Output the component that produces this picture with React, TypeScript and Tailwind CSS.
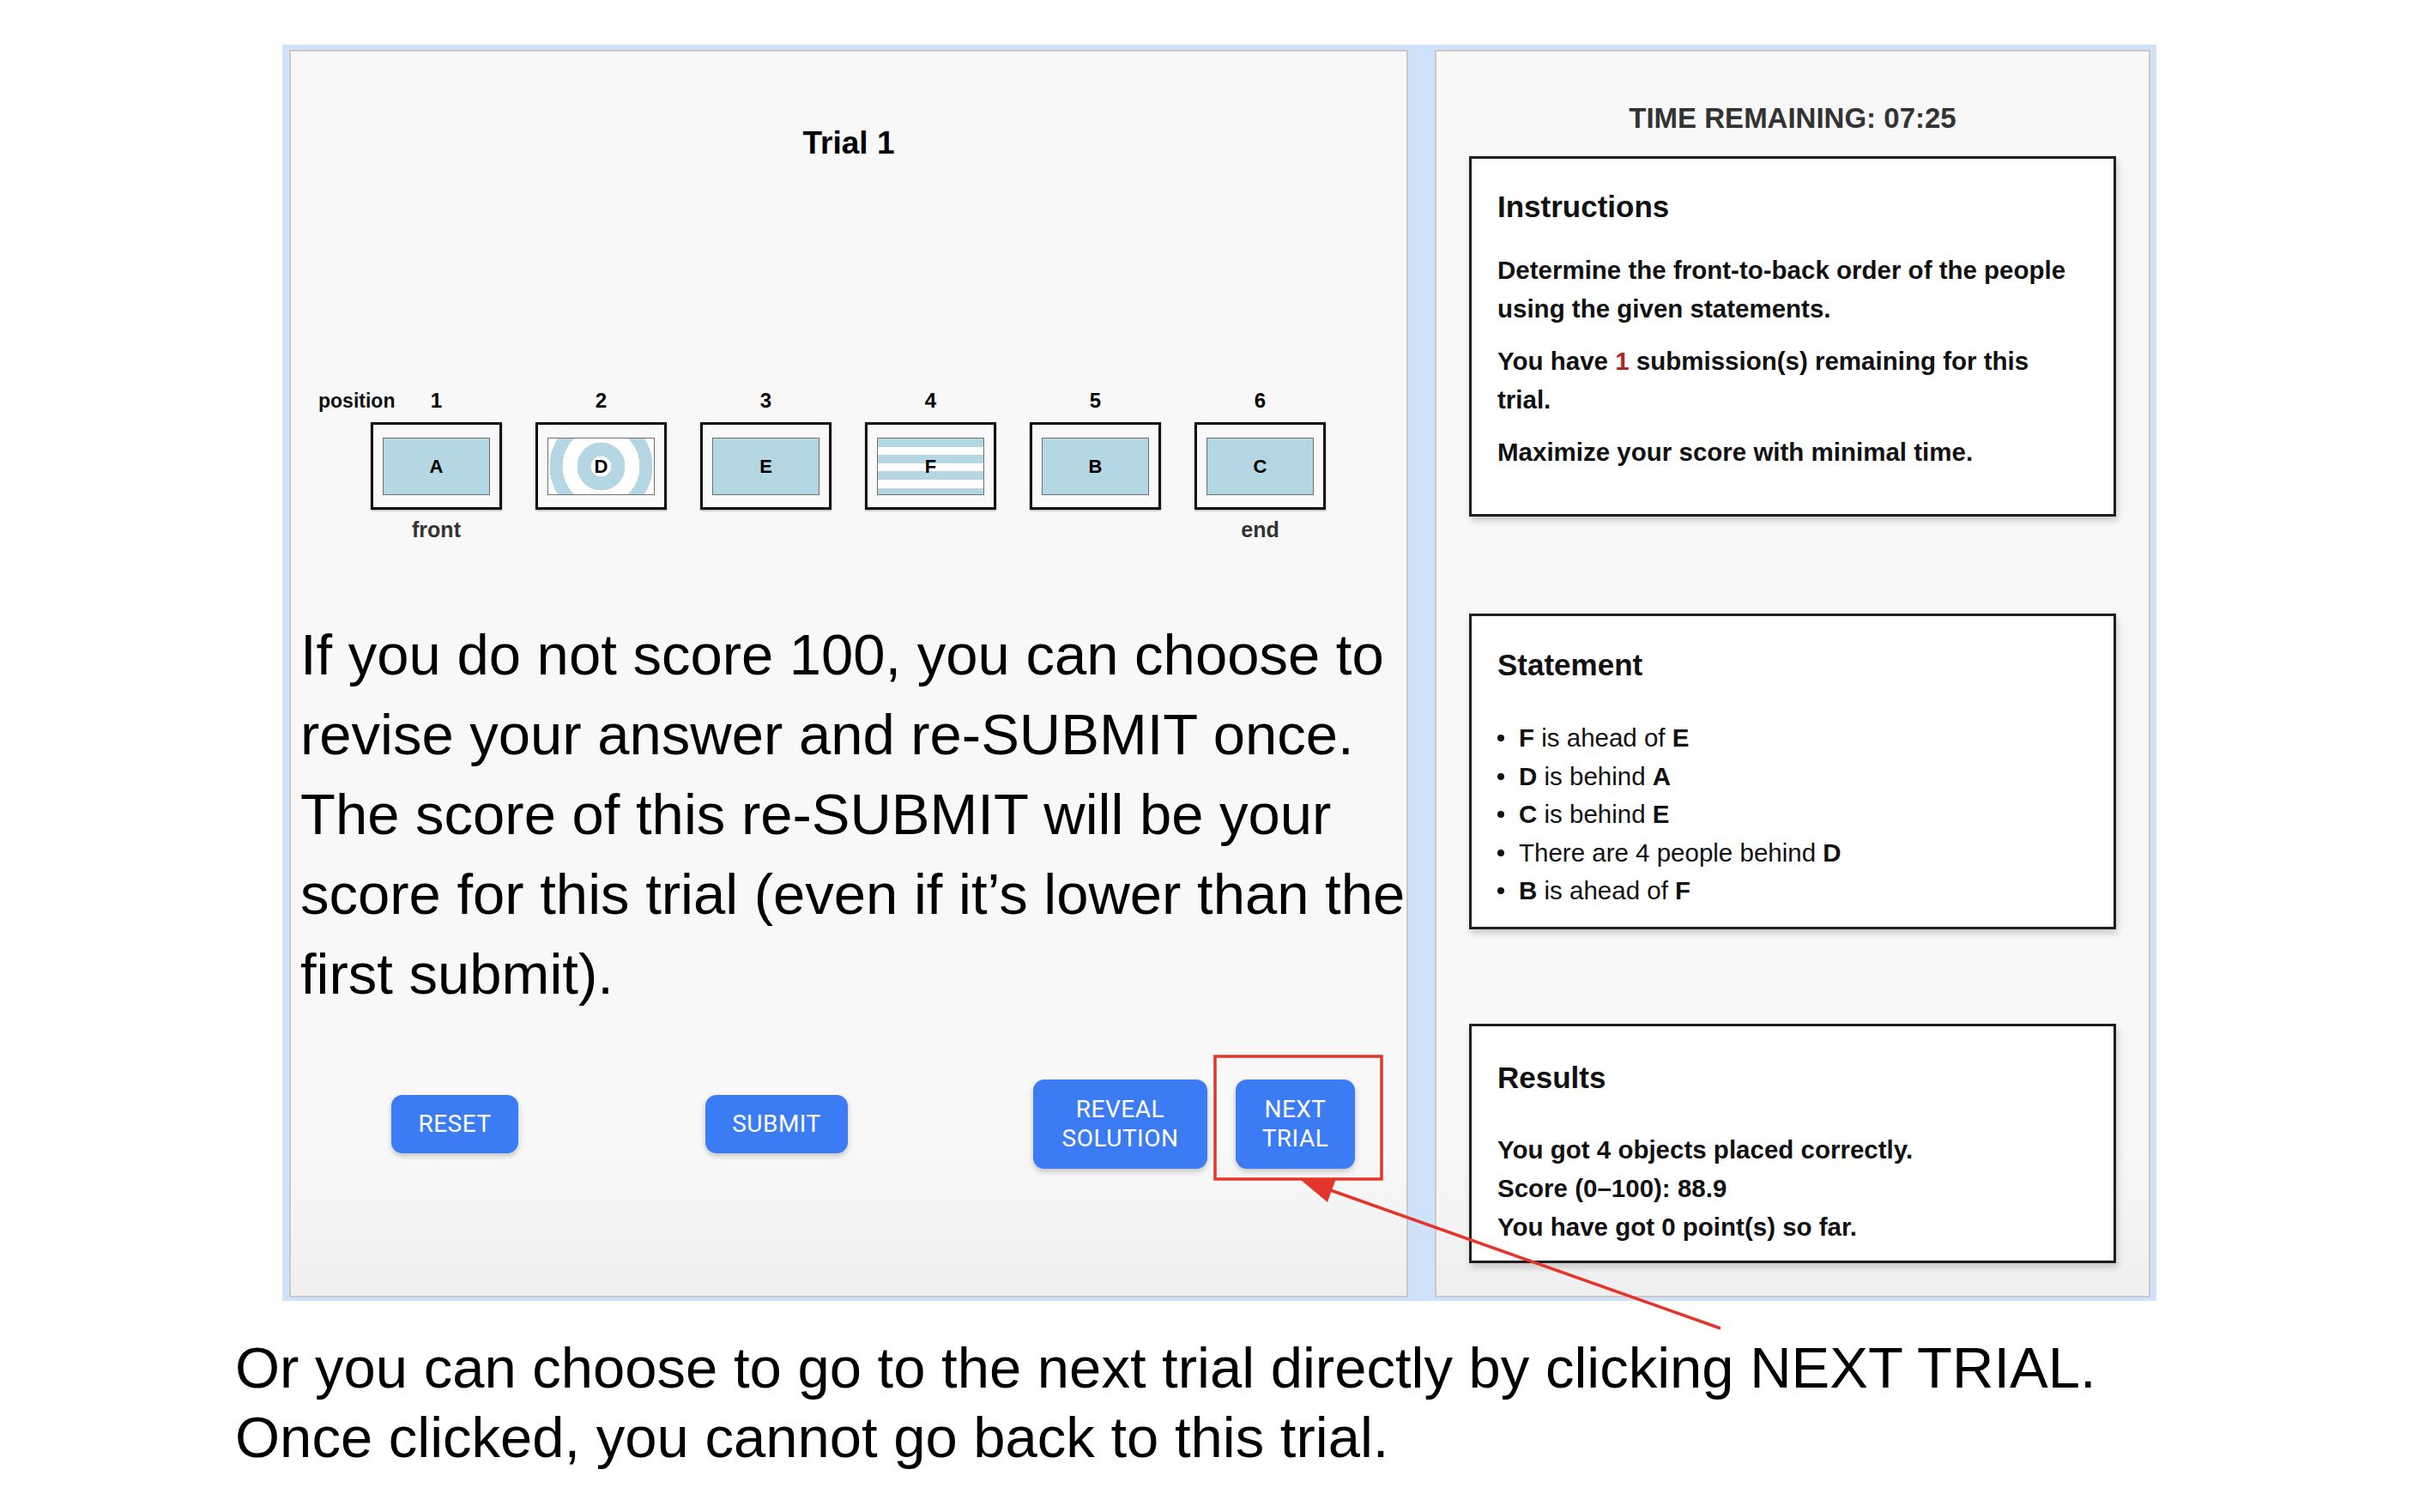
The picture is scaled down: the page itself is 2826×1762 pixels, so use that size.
import React from "react";

const SANS = { fontFamily: '"Liberation Sans", Arial, Helvetica, sans-serif' };
const ROBOTO = { fontFamily: 'Roboto, "Liberation Sans", Arial, sans-serif' };

type Tile = { letter: string; kind: "plain" | "rings" | "stripes" };
const tiles: Tile[] = [
  { letter: "A", kind: "plain" },
  { letter: "D", kind: "rings" },
  { letter: "E", kind: "plain" },
  { letter: "F", kind: "stripes" },
  { letter: "B", kind: "plain" },
  { letter: "C", kind: "plain" },
];

function Inner({ t }: { t: Tile }) {
  const base =
    "w-[125px] h-[67px] border border-[#6f6f6f] flex items-center justify-center text-[22px] font-bold text-black";
  if (t.kind === "rings")
    return (
      <div
        className={`${base} bg-[radial-gradient(circle_at_center,#ffffff_0px,#ffffff_12px,#b4d7e3_12px,#b4d7e3_28px,#ffffff_28px,#ffffff_45px,#b4d7e3_45px,#b4d7e3_60px,#ffffff_60px,#ffffff_76px,#b4d7e3_76px)]`}
      >
        {t.letter}
      </div>
    );
  if (t.kind === "stripes")
    return (
      <div
        className={`${base} bg-[repeating-linear-gradient(to_bottom,#b4d7e3_0px,#b4d7e3_9.6px,#ffffff_9.6px,#ffffff_19.2px)]`}
      >
        {t.letter}
      </div>
    );
  return <div className={`${base} bg-[#b4d7e3]`}>{t.letter}</div>;
}

function Btn({ children, w, h }: { children: React.ReactNode; w: string; h: string }) {
  return (
    <div
      style={ROBOTO}
      className={`${w} ${h} shrink-0 bg-[#3b7cf4] text-white rounded-[13px] shadow-[0_3px_6px_rgba(0,0,0,0.22)] flex items-center justify-center text-center text-[28px] leading-[34px] tracking-[0.5px]`}
    >
      {children}
    </div>
  );
}

function Box({
  className,
  title,
  children,
}: {
  className: string;
  title: string;
  children: React.ReactNode;
}) {
  return (
    <div
      className={`mx-[38px] bg-white border-[3px] border-[#1e1e1e] px-[30px] shadow-[2px_5px_8px_rgba(0,0,0,0.18)] ${className}`}
    >
      <div className="text-[35px] leading-[40px] font-bold text-[#111]">{title}</div>
      {children}
    </div>
  );
}

export default function App() {
  const statements: React.ReactNode[] = [
    <>
      <b>F</b> is ahead of <b>E</b>
    </>,
    <>
      <b>D</b> is behind <b>A</b>
    </>,
    <>
      <b>C</b> is behind <b>E</b>
    </>,
    <>
      There are 4 people behind <b>D</b>
    </>,
    <>
      <b>B</b> is ahead of <b>F</b>
    </>,
  ];

  return (
    <div style={SANS} className="relative w-[2826px] h-[1762px] bg-white overflow-hidden text-black">
      {/* frame */}
      <div className="ml-[329px] mt-[52px] w-[2184px] h-[1464px] bg-[#d0e2fa] pl-[8px] pr-[7px] pt-[6px] pb-[4px] flex gap-[31px]">
        {/* left panel */}
        <div className="w-[1304px] h-full border-2 border-[#c9c9c9] bg-[linear-gradient(to_bottom,#f8f8f8_0%,#f8f8f8_88%,#efefef_100%)] flex flex-col">
          <div className="pt-[85px] text-center text-[37px] leading-[44px] font-bold">Trial 1</div>

          {/* numbers row */}
          <div className="mt-[263px] flex items-center">
            <div className="ml-[32px] w-[61px] whitespace-nowrap text-[23px] leading-[30px] font-bold text-[#111]">
              position
            </div>
            {tiles.map((_, i) => (
              <div key={i} className="w-[153px] mr-[39px] text-center text-[24px] leading-[30px] font-bold">
                {i + 1}
              </div>
            ))}
          </div>

          {/* boxes */}
          <div className="mt-[10px] ml-[93px] flex gap-[39px]">
            {tiles.map((t, i) => (
              <div
                key={i}
                className="w-[153px] h-[102px] border-[3px] border-[#111] shadow-[0_1px_2px_rgba(0,0,0,0.35)] bg-[#f9f9f9] flex items-center justify-center"
              >
                <Inner t={t} />
              </div>
            ))}
          </div>

          {/* labels */}
          <div className="mt-[8px] ml-[93px] flex gap-[39px] text-[25px] leading-[30px] font-bold text-[#333]">
            {tiles.map((_, i) => (
              <div key={i} className="w-[153px] text-center">
                {i === 0 ? "front" : i === 5 ? "end" : ""}
              </div>
            ))}
          </div>

          {/* big paragraph */}
          <div className="mt-[84px] ml-[11px] whitespace-nowrap text-[67px] leading-[93px] text-black">
            If you do not score 100, you can choose to
            <br />
            revise your answer and re-SUBMIT once.
            <br />
            The score of this re-SUBMIT will be your
            <br />
            score for this trial (even if it’s lower than the
            <br />
            first submit).
          </div>

          {/* buttons */}
          <div className="mt-[77px] ml-[117px] flex items-center">
            <Btn w="w-[148px]" h="h-[68px]">RESET</Btn>
            <div className="ml-[218px]">
              <Btn w="w-[166px]" h="h-[68px]">SUBMIT</Btn>
            </div>
            <div className="ml-[216px]">
              <Btn w="w-[203px]" h="h-[104px]">
                REVEAL
                <br />
                SOLUTION
              </Btn>
            </div>
            <div className="ml-[33px]">
              <Btn w="w-[139px]" h="h-[104px]">
                NEXT
                <br />
                TRIAL
              </Btn>
            </div>
          </div>
        </div>

        {/* right panel */}
        <div className="w-[834px] h-full border-2 border-[#c9c9c9] bg-[linear-gradient(to_bottom,#f8f8f8_0%,#f8f8f8_88%,#efefef_100%)] flex flex-col">
          <div className="mt-[58px] text-center text-[33px] leading-[40px] font-bold text-[#333]">
            TIME REMAINING: 07:25
          </div>

          <Box className="mt-[24px] pt-[36px] pb-[50.5px]" title="Instructions">
            <div className="text-[29.5px] leading-[45px] font-bold text-[#111]">
              <p className="mt-[30.5px]">
                Determine the front-to-back order of the people
                <br />
                using the given statements.
              </p>
              <p className="mt-[16px]">
                You have <span className="text-[#b0261f]">1</span> submission(s) remaining for this
                <br />
                trial.
              </p>
              <p className="mt-[16px]">Maximize your score with minimal time.</p>
            </div>
          </Box>

          <Box className="mt-[113px] pt-[37px] pb-[19.5px]" title="Statement">
            <div className="mt-[43px] text-[29.5px] leading-[44.5px] text-[#111]">
              {statements.map((s, i) => (
                <div key={i} className="flex items-center">
                  <span className="w-[8px] h-[8px] rounded-full bg-[#111] shrink-0 mr-[17px]" />
                  <span>{s}</span>
                </div>
              ))}
            </div>
          </Box>

          <Box className="mt-[110px] pt-[40px] pb-[17.5px]" title="Results">
            <div className="mt-[40.5px] text-[29.5px] leading-[45px] font-bold text-[#111]">
              <div>You got 4 objects placed correctly.</div>
              <div>Score (0–100): 88.9</div>
              <div>You have got 0 point(s) so far.</div>
            </div>
          </Box>
        </div>
      </div>

      {/* bottom caption */}
      <div className="mt-[37px] ml-[274px] whitespace-nowrap text-[67px] leading-[81px] text-black">
        Or you can choose to go to the next trial directly by clicking NEXT TRIAL.
        <br />
        Once clicked, you cannot go back to this trial.
      </div>

      {/* annotation overlay */}
      <svg
        className="absolute top-0 left-0 pointer-events-none"
        width="2826"
        height="1762"
        viewBox="0 0 2826 1762"
      >
        <rect x="1416" y="1231" width="194" height="143" fill="none" stroke="#e5352a" strokeWidth="3.5" />
        <line x1="2005" y1="1548" x2="1545" y2="1385" stroke="#e5352a" strokeWidth="3.5" />
        <polygon points="1516,1375 1556.5,1374.5 1547,1401" fill="#e5352a" />
      </svg>
    </div>
  );
}
